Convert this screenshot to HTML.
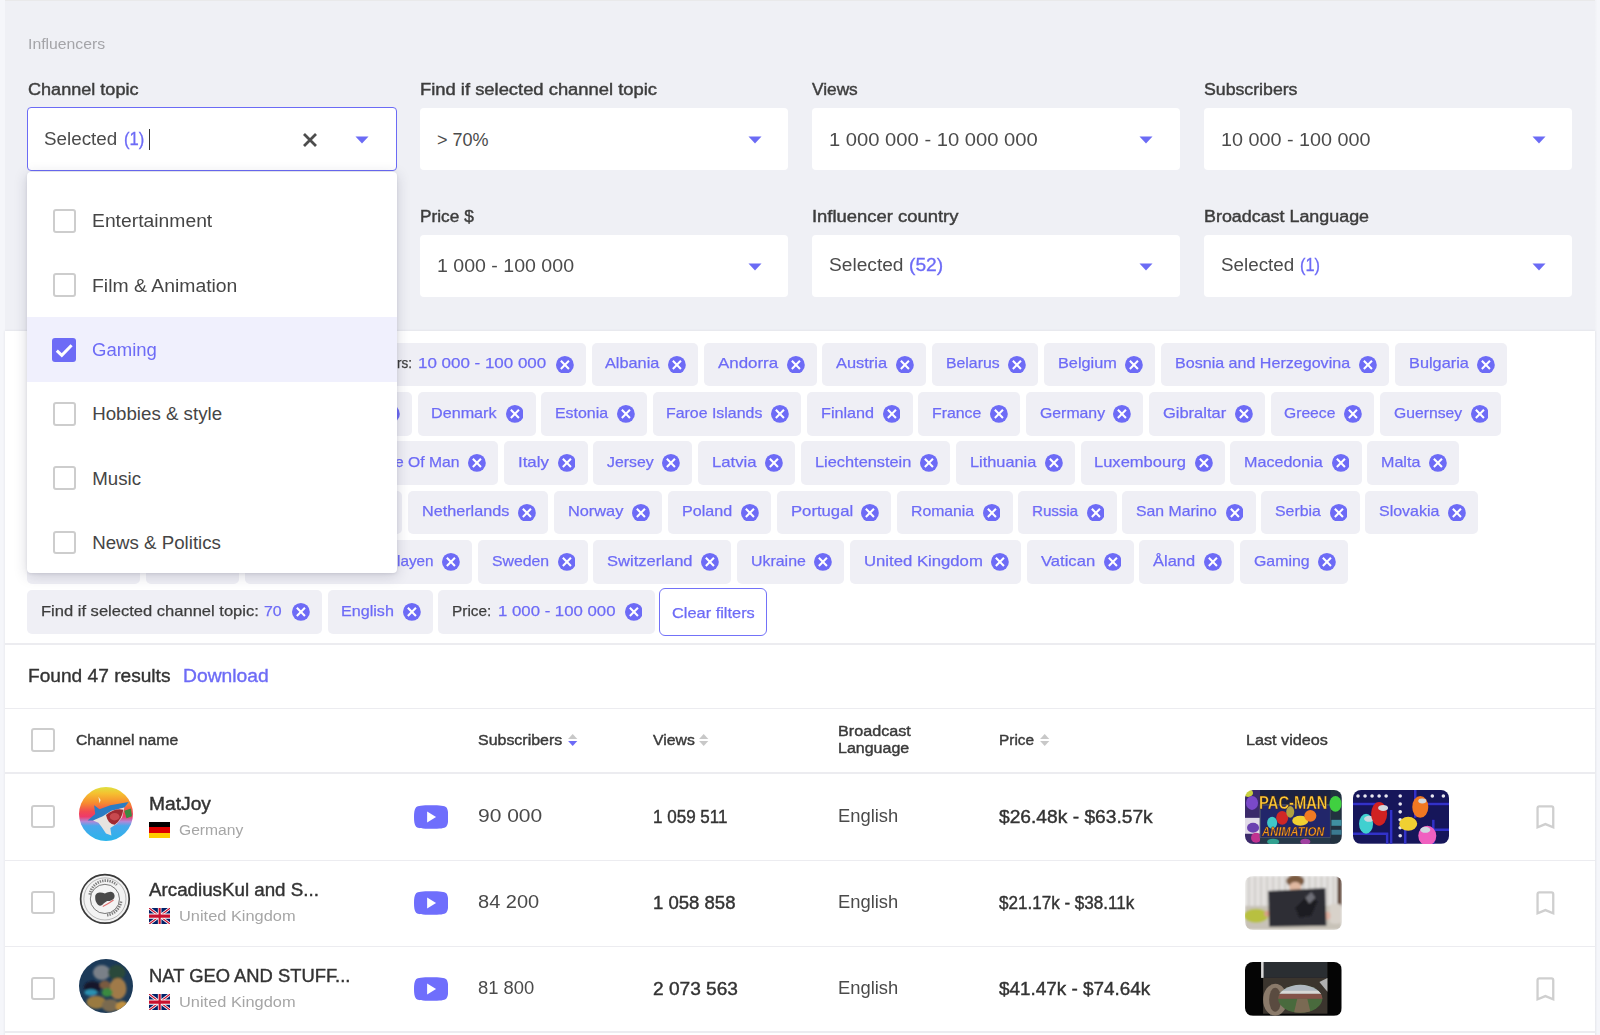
<!DOCTYPE html><html><head><meta charset="utf-8"><style>
html,body{margin:0;padding:0}
body{width:1600px;height:1035px;position:relative;overflow:hidden;background:#fff;font-family:"Liberation Sans",sans-serif}
.t{position:absolute;white-space:nowrap}
.r{position:absolute}
.av0{background:radial-gradient(circle at 55% 55%,#e8e4e0 0 18%,transparent 30%),linear-gradient(180deg,#f2c24a 0%,#ef6a3c 25%,#e84a6a 45%,#8ab6e0 60%,#3aa8e0 80%,#2b90d0 100%)}
.av1{background:radial-gradient(circle at 50% 50%,#555 0 14%,#fff 15% 52%,#666 53% 56%,#fff 57% 84%,#333 85% 92%,#bbb 93%)}
.av2{background:radial-gradient(circle at 65% 60%,#8a6a3a 0 18%,transparent 30%),radial-gradient(circle at 35% 70%,#6a5a30 0 15%,transparent 25%),linear-gradient(160deg,#1a3050 0%,#2a4a5a 40%,#3a5a40 70%,#1a2a3a 100%)}
.th{overflow:hidden}
.th svg,.r svg{display:block}
.th0a{background:radial-gradient(ellipse at 50% 25%,#f0b020 0 20%,transparent 30%),radial-gradient(ellipse at 50% 85%,#e89020 0 15%,transparent 25%),radial-gradient(circle at 30% 55%,#d03030 0 10%,transparent 16%),radial-gradient(circle at 75% 50%,#40c0a0 0 10%,transparent 16%),linear-gradient(90deg,#3a2a6a,#1a3a5a 30%,#2a2a5a 70%,#4a2a6a)}
.th0b{background:radial-gradient(circle at 35% 45%,#d02020 0 14%,transparent 20%),radial-gradient(circle at 60% 50%,#f0c020 0 10%,transparent 16%),radial-gradient(circle at 20% 60%,#40d0d0 0 10%,transparent 16%),radial-gradient(circle at 72% 35%,#f07a20 0 10%,transparent 16%),radial-gradient(circle at 80% 85%,#f070c0 0 10%,transparent 16%),linear-gradient(#1a1a8a,#15157a)}
.th1a{background:radial-gradient(ellipse at 50% 10%,#c8a080 0 10%,transparent 16%),linear-gradient(90deg,transparent 0 20%,#2a2a30 20% 82%,transparent 82%) 0 28%/100% 62% no-repeat,linear-gradient(90deg,#c8c8c0,#e8e4dc 50%,#d0ccc4)}
.th2a{background:radial-gradient(ellipse at 50% 60%,#b8b0a0 0 22%,#6a6050 28%,transparent 34%),#0a0a0a}
</style></head><body>
<div class="r" style="left:0.00px;top:0.00px;width:5.00px;height:1035.00px;background:#f5f6fa"></div>
<div class="r" style="left:1595.00px;top:0.00px;width:5.00px;height:1035.00px;background:linear-gradient(90deg,#f0f1f5,#f5f6fa 45%)"></div>
<div class="r" style="left:5.00px;top:0.00px;width:1590.00px;height:331.00px;background:#eff0f5"></div>
<div class="r" style="left:5.00px;top:0.00px;width:1590.00px;height:1.30px;background:#e9e9ea"></div>
<div class="r" style="left:5.00px;top:330.70px;width:1590.00px;height:709.30px;background:#ffffff;box-shadow:0 0 2.5px rgba(60,60,80,0.10)"></div>
<div class="t" style="left:27.50px;top:36.28px;font-size:15.5px;line-height:15.5px;color:#a4a4a8;transform:scaleX(1.0172);transform-origin:0 0;">Influencers</div>
<div class="t" style="left:27.50px;top:82.36px;font-size:16px;line-height:16px;color:#3d3d3d;-webkit-text-stroke:0.42px #3d3d3d;transform:scaleX(1.1293);transform-origin:0 0;">Channel topic</div>
<div class="t" style="left:419.50px;top:82.36px;font-size:16px;line-height:16px;color:#3d3d3d;-webkit-text-stroke:0.42px #3d3d3d;transform:scaleX(1.1485);transform-origin:0 0;">Find if selected channel topic</div>
<div class="t" style="left:811.75px;top:82.36px;font-size:16px;line-height:16px;color:#3d3d3d;-webkit-text-stroke:0.42px #3d3d3d;transform:scaleX(1.0790);transform-origin:0 0;">Views</div>
<div class="t" style="left:1203.50px;top:82.36px;font-size:16px;line-height:16px;color:#3d3d3d;-webkit-text-stroke:0.42px #3d3d3d;transform:scaleX(1.1065);transform-origin:0 0;">Subscribers</div>
<div class="t" style="left:420.00px;top:209.46px;font-size:16px;line-height:16px;color:#3d3d3d;-webkit-text-stroke:0.42px #3d3d3d;transform:scaleX(1.0793);transform-origin:0 0;">Price $</div>
<div class="t" style="left:811.50px;top:209.46px;font-size:16px;line-height:16px;color:#3d3d3d;-webkit-text-stroke:0.42px #3d3d3d;transform:scaleX(1.1517);transform-origin:0 0;">Influencer country</div>
<div class="t" style="left:1203.75px;top:209.46px;font-size:16px;line-height:16px;color:#3d3d3d;-webkit-text-stroke:0.42px #3d3d3d;transform:scaleX(1.1175);transform-origin:0 0;">Broadcast Language</div>
<div class="r" style="left:27.00px;top:107.00px;width:370.20px;height:63.60px;background:#fff;border:1.3px solid #6b6bf5;border-radius:4px;box-sizing:border-box"></div>
<div class="r" style="left:419.60px;top:108.00px;width:368.50px;height:62.00px;background:#fff;border-radius:4px"></div>
<div class="r" style="left:811.80px;top:108.00px;width:368.50px;height:62.00px;background:#fff;border-radius:4px"></div>
<div class="r" style="left:1203.75px;top:108.00px;width:368.50px;height:62.00px;background:#fff;border-radius:4px"></div>
<div class="r" style="left:27.00px;top:235.00px;width:368.50px;height:61.50px;background:#fff;border-radius:4px"></div>
<div class="r" style="left:419.60px;top:235.00px;width:368.50px;height:61.50px;background:#fff;border-radius:4px"></div>
<div class="r" style="left:811.80px;top:235.00px;width:368.50px;height:61.50px;background:#fff;border-radius:4px"></div>
<div class="r" style="left:1203.75px;top:235.00px;width:368.50px;height:61.50px;background:#fff;border-radius:4px"></div>
<div class="t" style="left:43.75px;top:130.06px;font-size:18px;line-height:18px;color:#4b4b4b;transform:scaleX(1.0457);transform-origin:0 0;">Selected</div>
<div class="t" style="left:124.00px;top:130.06px;font-size:18px;line-height:18px;color:#6d6bf6;transform:scaleX(0.9205);transform-origin:0 0;-webkit-text-stroke:0.3px #6d6bf6;">(1)</div>
<div class="r" style="left:148.50px;top:129.00px;width:1.50px;height:21.00px;background:#333"></div>
<svg class="r" style="left:302px;top:131.5px" width="16" height="16" viewBox="0 0 16 16"><path d="M2 2L14 14M14 2L2 14" stroke="#4d4d4d" stroke-width="2.8" stroke-linecap="butt"/></svg>
<svg class="r" style="left:354.5px;top:135.5px" width="14" height="8" viewBox="0 0 14 8"><path d="M0.5 0.5H13.5L7 7.5Z" fill="#6b6bf5"/></svg>
<div class="t" style="left:436.90px;top:130.96px;font-size:18px;line-height:18px;color:#4b4b4b;">&gt; 70%</div>
<svg class="r" style="left:747.8px;top:136px" width="14" height="8" viewBox="0 0 14 8"><path d="M0.5 0.5H13.5L7 7.5Z" fill="#6b6bf5"/></svg>
<div class="t" style="left:828.75px;top:130.66px;font-size:18px;line-height:18px;color:#4b4b4b;transform:scaleX(1.1214);transform-origin:0 0;">1 000 000 - 10 000 000</div>
<svg class="r" style="left:1139.3px;top:136px" width="14" height="8" viewBox="0 0 14 8"><path d="M0.5 0.5H13.5L7 7.5Z" fill="#6b6bf5"/></svg>
<div class="t" style="left:1220.50px;top:130.66px;font-size:18px;line-height:18px;color:#4b4b4b;transform:scaleX(1.0985);transform-origin:0 0;">10 000 - 100 000</div>
<svg class="r" style="left:1531.5px;top:136px" width="14" height="8" viewBox="0 0 14 8"><path d="M0.5 0.5H13.5L7 7.5Z" fill="#6b6bf5"/></svg>
<div class="t" style="left:436.75px;top:256.96px;font-size:18px;line-height:18px;color:#4b4b4b;transform:scaleX(1.0864);transform-origin:0 0;">1 000 - 100 000</div>
<svg class="r" style="left:747.8px;top:263px" width="14" height="8" viewBox="0 0 14 8"><path d="M0.5 0.5H13.5L7 7.5Z" fill="#6b6bf5"/></svg>
<div class="t" style="left:828.50px;top:256.16px;font-size:18px;line-height:18px;color:#4b4b4b;transform:scaleX(1.0635);transform-origin:0 0;">Selected</div>
<div class="t" style="left:908.80px;top:256.16px;font-size:18px;line-height:18px;color:#6d6bf6;transform:scaleX(1.0688);transform-origin:0 0;-webkit-text-stroke:0.3px #6d6bf6;">(52)</div>
<svg class="r" style="left:1139.3px;top:263px" width="14" height="8" viewBox="0 0 14 8"><path d="M0.5 0.5H13.5L7 7.5Z" fill="#6b6bf5"/></svg>
<div class="t" style="left:1220.75px;top:255.86px;font-size:18px;line-height:18px;color:#4b4b4b;transform:scaleX(1.0457);transform-origin:0 0;">Selected</div>
<div class="t" style="left:1300.00px;top:255.86px;font-size:18px;line-height:18px;color:#6d6bf6;transform:scaleX(0.9091);transform-origin:0 0;-webkit-text-stroke:0.3px #6d6bf6;">(1)</div>
<svg class="r" style="left:1531.5px;top:263px" width="14" height="8" viewBox="0 0 14 8"><path d="M0.5 0.5H13.5L7 7.5Z" fill="#6b6bf5"/></svg>
<div class="r" style="left:120.00px;top:342.50px;width:465.75px;height:43.75px;background:#efeff5;border-radius:5px"></div>
<svg class="r" style="left:555.75px;top:355.60px" width="17.8" height="17.8" viewBox="0 0 18 18"><circle cx="9" cy="9" r="9" fill="#6d6bf6"/><path d="M4.9 4.9L13.1 13.1M13.1 4.9L4.9 13.1" stroke="#fff" stroke-width="2.1"/></svg>
<div class="r" style="left:591.50px;top:342.50px;width:106.75px;height:43.75px;background:#efeff5;border-radius:5px"></div>
<svg class="r" style="left:668.25px;top:355.60px" width="17.8" height="17.8" viewBox="0 0 18 18"><circle cx="9" cy="9" r="9" fill="#6d6bf6"/><path d="M4.9 4.9L13.1 13.1M13.1 4.9L4.9 13.1" stroke="#fff" stroke-width="2.1"/></svg>
<div class="t" style="left:605.30px;top:355.00px;font-size:15px;line-height:15px;color:#6d6bf6;transform:scaleX(1.0859);transform-origin:0 0;-webkit-text-stroke:0.25px #6d6bf6;">Albania</div>
<div class="r" style="left:704.25px;top:342.50px;width:112.50px;height:43.75px;background:#efeff5;border-radius:5px"></div>
<svg class="r" style="left:786.75px;top:355.60px" width="17.8" height="17.8" viewBox="0 0 18 18"><circle cx="9" cy="9" r="9" fill="#6d6bf6"/><path d="M4.9 4.9L13.1 13.1M13.1 4.9L4.9 13.1" stroke="#fff" stroke-width="2.1"/></svg>
<div class="t" style="left:718.05px;top:355.00px;font-size:15px;line-height:15px;color:#6d6bf6;transform:scaleX(1.1265);transform-origin:0 0;-webkit-text-stroke:0.25px #6d6bf6;">Andorra</div>
<div class="r" style="left:822.25px;top:342.50px;width:103.50px;height:43.75px;background:#efeff5;border-radius:5px"></div>
<svg class="r" style="left:895.75px;top:355.60px" width="17.8" height="17.8" viewBox="0 0 18 18"><circle cx="9" cy="9" r="9" fill="#6d6bf6"/><path d="M4.9 4.9L13.1 13.1M13.1 4.9L4.9 13.1" stroke="#fff" stroke-width="2.1"/></svg>
<div class="t" style="left:836.05px;top:355.00px;font-size:15px;line-height:15px;color:#6d6bf6;transform:scaleX(1.0942);transform-origin:0 0;-webkit-text-stroke:0.25px #6d6bf6;">Austria</div>
<div class="r" style="left:931.75px;top:342.50px;width:106.00px;height:43.75px;background:#efeff5;border-radius:5px"></div>
<svg class="r" style="left:1007.75px;top:355.60px" width="17.8" height="17.8" viewBox="0 0 18 18"><circle cx="9" cy="9" r="9" fill="#6d6bf6"/><path d="M4.9 4.9L13.1 13.1M13.1 4.9L4.9 13.1" stroke="#fff" stroke-width="2.1"/></svg>
<div class="t" style="left:945.55px;top:355.00px;font-size:15px;line-height:15px;color:#6d6bf6;transform:scaleX(1.0541);transform-origin:0 0;-webkit-text-stroke:0.25px #6d6bf6;">Belarus</div>
<div class="r" style="left:1044.00px;top:342.50px;width:111.25px;height:43.75px;background:#efeff5;border-radius:5px"></div>
<svg class="r" style="left:1125.25px;top:355.60px" width="17.8" height="17.8" viewBox="0 0 18 18"><circle cx="9" cy="9" r="9" fill="#6d6bf6"/><path d="M4.9 4.9L13.1 13.1M13.1 4.9L4.9 13.1" stroke="#fff" stroke-width="2.1"/></svg>
<div class="t" style="left:1057.80px;top:355.00px;font-size:15px;line-height:15px;color:#6d6bf6;transform:scaleX(1.0858);transform-origin:0 0;-webkit-text-stroke:0.25px #6d6bf6;">Belgium</div>
<div class="r" style="left:1161.25px;top:342.50px;width:227.50px;height:43.75px;background:#efeff5;border-radius:5px"></div>
<svg class="r" style="left:1358.75px;top:355.60px" width="17.8" height="17.8" viewBox="0 0 18 18"><circle cx="9" cy="9" r="9" fill="#6d6bf6"/><path d="M4.9 4.9L13.1 13.1M13.1 4.9L4.9 13.1" stroke="#fff" stroke-width="2.1"/></svg>
<div class="t" style="left:1175.05px;top:355.00px;font-size:15px;line-height:15px;color:#6d6bf6;transform:scaleX(1.0713);transform-origin:0 0;-webkit-text-stroke:0.25px #6d6bf6;">Bosnia and Herzegovina</div>
<div class="r" style="left:1394.75px;top:342.50px;width:112.25px;height:43.75px;background:#efeff5;border-radius:5px"></div>
<svg class="r" style="left:1477.00px;top:355.60px" width="17.8" height="17.8" viewBox="0 0 18 18"><circle cx="9" cy="9" r="9" fill="#6d6bf6"/><path d="M4.9 4.9L13.1 13.1M13.1 4.9L4.9 13.1" stroke="#fff" stroke-width="2.1"/></svg>
<div class="t" style="left:1408.55px;top:355.00px;font-size:15px;line-height:15px;color:#6d6bf6;transform:scaleX(1.0872);transform-origin:0 0;-webkit-text-stroke:0.25px #6d6bf6;">Bulgaria</div>
<div class="r" style="left:300.00px;top:392.00px;width:111.75px;height:43.75px;background:#efeff5;border-radius:5px"></div>
<svg class="r" style="left:381.75px;top:405.10px" width="17.8" height="17.8" viewBox="0 0 18 18"><circle cx="9" cy="9" r="9" fill="#6d6bf6"/><path d="M4.9 4.9L13.1 13.1M13.1 4.9L4.9 13.1" stroke="#fff" stroke-width="2.1"/></svg>
<div class="r" style="left:417.50px;top:392.00px;width:118.00px;height:43.75px;background:#efeff5;border-radius:5px"></div>
<svg class="r" style="left:505.50px;top:405.10px" width="17.8" height="17.8" viewBox="0 0 18 18"><circle cx="9" cy="9" r="9" fill="#6d6bf6"/><path d="M4.9 4.9L13.1 13.1M13.1 4.9L4.9 13.1" stroke="#fff" stroke-width="2.1"/></svg>
<div class="t" style="left:431.30px;top:404.50px;font-size:15px;line-height:15px;color:#6d6bf6;transform:scaleX(1.0772);transform-origin:0 0;-webkit-text-stroke:0.25px #6d6bf6;">Denmark</div>
<div class="r" style="left:541.25px;top:392.00px;width:105.50px;height:43.75px;background:#efeff5;border-radius:5px"></div>
<svg class="r" style="left:616.75px;top:405.10px" width="17.8" height="17.8" viewBox="0 0 18 18"><circle cx="9" cy="9" r="9" fill="#6d6bf6"/><path d="M4.9 4.9L13.1 13.1M13.1 4.9L4.9 13.1" stroke="#fff" stroke-width="2.1"/></svg>
<div class="t" style="left:555.05px;top:404.50px;font-size:15px;line-height:15px;color:#6d6bf6;transform:scaleX(1.0609);transform-origin:0 0;-webkit-text-stroke:0.25px #6d6bf6;">Estonia</div>
<div class="r" style="left:652.50px;top:392.00px;width:148.75px;height:43.75px;background:#efeff5;border-radius:5px"></div>
<svg class="r" style="left:771.25px;top:405.10px" width="17.8" height="17.8" viewBox="0 0 18 18"><circle cx="9" cy="9" r="9" fill="#6d6bf6"/><path d="M4.9 4.9L13.1 13.1M13.1 4.9L4.9 13.1" stroke="#fff" stroke-width="2.1"/></svg>
<div class="t" style="left:666.30px;top:404.50px;font-size:15px;line-height:15px;color:#6d6bf6;transform:scaleX(1.0600);transform-origin:0 0;-webkit-text-stroke:0.25px #6d6bf6;">Faroe Islands</div>
<div class="r" style="left:807.00px;top:392.00px;width:105.50px;height:43.75px;background:#efeff5;border-radius:5px"></div>
<svg class="r" style="left:882.50px;top:405.10px" width="17.8" height="17.8" viewBox="0 0 18 18"><circle cx="9" cy="9" r="9" fill="#6d6bf6"/><path d="M4.9 4.9L13.1 13.1M13.1 4.9L4.9 13.1" stroke="#fff" stroke-width="2.1"/></svg>
<div class="t" style="left:820.80px;top:404.50px;font-size:15px;line-height:15px;color:#6d6bf6;transform:scaleX(1.0793);transform-origin:0 0;-webkit-text-stroke:0.25px #6d6bf6;">Finland</div>
<div class="r" style="left:918.25px;top:392.00px;width:101.75px;height:43.75px;background:#efeff5;border-radius:5px"></div>
<svg class="r" style="left:990.00px;top:405.10px" width="17.8" height="17.8" viewBox="0 0 18 18"><circle cx="9" cy="9" r="9" fill="#6d6bf6"/><path d="M4.9 4.9L13.1 13.1M13.1 4.9L4.9 13.1" stroke="#fff" stroke-width="2.1"/></svg>
<div class="t" style="left:932.05px;top:404.50px;font-size:15px;line-height:15px;color:#6d6bf6;transform:scaleX(1.0567);transform-origin:0 0;-webkit-text-stroke:0.25px #6d6bf6;">France</div>
<div class="r" style="left:1025.75px;top:392.00px;width:117.50px;height:43.75px;background:#efeff5;border-radius:5px"></div>
<svg class="r" style="left:1113.25px;top:405.10px" width="17.8" height="17.8" viewBox="0 0 18 18"><circle cx="9" cy="9" r="9" fill="#6d6bf6"/><path d="M4.9 4.9L13.1 13.1M13.1 4.9L4.9 13.1" stroke="#fff" stroke-width="2.1"/></svg>
<div class="t" style="left:1039.55px;top:404.50px;font-size:15px;line-height:15px;color:#6d6bf6;transform:scaleX(1.0551);transform-origin:0 0;-webkit-text-stroke:0.25px #6d6bf6;">Germany</div>
<div class="r" style="left:1149.25px;top:392.00px;width:115.50px;height:43.75px;background:#efeff5;border-radius:5px"></div>
<svg class="r" style="left:1234.75px;top:405.10px" width="17.8" height="17.8" viewBox="0 0 18 18"><circle cx="9" cy="9" r="9" fill="#6d6bf6"/><path d="M4.9 4.9L13.1 13.1M13.1 4.9L4.9 13.1" stroke="#fff" stroke-width="2.1"/></svg>
<div class="t" style="left:1163.05px;top:404.50px;font-size:15px;line-height:15px;color:#6d6bf6;transform:scaleX(1.0974);transform-origin:0 0;-webkit-text-stroke:0.25px #6d6bf6;">Gibraltar</div>
<div class="r" style="left:1270.50px;top:392.00px;width:103.75px;height:43.75px;background:#efeff5;border-radius:5px"></div>
<svg class="r" style="left:1344.25px;top:405.10px" width="17.8" height="17.8" viewBox="0 0 18 18"><circle cx="9" cy="9" r="9" fill="#6d6bf6"/><path d="M4.9 4.9L13.1 13.1M13.1 4.9L4.9 13.1" stroke="#fff" stroke-width="2.1"/></svg>
<div class="t" style="left:1284.30px;top:404.50px;font-size:15px;line-height:15px;color:#6d6bf6;transform:scaleX(1.0437);transform-origin:0 0;-webkit-text-stroke:0.25px #6d6bf6;">Greece</div>
<div class="r" style="left:1380.00px;top:392.00px;width:120.50px;height:43.75px;background:#efeff5;border-radius:5px"></div>
<svg class="r" style="left:1470.50px;top:405.10px" width="17.8" height="17.8" viewBox="0 0 18 18"><circle cx="9" cy="9" r="9" fill="#6d6bf6"/><path d="M4.9 4.9L13.1 13.1M13.1 4.9L4.9 13.1" stroke="#fff" stroke-width="2.1"/></svg>
<div class="t" style="left:1393.80px;top:404.50px;font-size:15px;line-height:15px;color:#6d6bf6;transform:scaleX(1.0469);transform-origin:0 0;-webkit-text-stroke:0.25px #6d6bf6;">Guernsey</div>
<div class="r" style="left:300.00px;top:441.25px;width:198.25px;height:43.75px;background:#efeff5;border-radius:5px"></div>
<svg class="r" style="left:468.25px;top:454.35px" width="17.8" height="17.8" viewBox="0 0 18 18"><circle cx="9" cy="9" r="9" fill="#6d6bf6"/><path d="M4.9 4.9L13.1 13.1M13.1 4.9L4.9 13.1" stroke="#fff" stroke-width="2.1"/></svg>
<div class="r" style="left:504.25px;top:441.25px;width:83.25px;height:43.75px;background:#efeff5;border-radius:5px"></div>
<svg class="r" style="left:557.50px;top:454.35px" width="17.8" height="17.8" viewBox="0 0 18 18"><circle cx="9" cy="9" r="9" fill="#6d6bf6"/><path d="M4.9 4.9L13.1 13.1M13.1 4.9L4.9 13.1" stroke="#fff" stroke-width="2.1"/></svg>
<div class="t" style="left:518.05px;top:453.75px;font-size:15px;line-height:15px;color:#6d6bf6;transform:scaleX(1.1218);transform-origin:0 0;-webkit-text-stroke:0.25px #6d6bf6;">Italy</div>
<div class="r" style="left:593.25px;top:441.25px;width:99.00px;height:43.75px;background:#efeff5;border-radius:5px"></div>
<svg class="r" style="left:662.25px;top:454.35px" width="17.8" height="17.8" viewBox="0 0 18 18"><circle cx="9" cy="9" r="9" fill="#6d6bf6"/><path d="M4.9 4.9L13.1 13.1M13.1 4.9L4.9 13.1" stroke="#fff" stroke-width="2.1"/></svg>
<div class="t" style="left:607.05px;top:453.75px;font-size:15px;line-height:15px;color:#6d6bf6;transform:scaleX(1.0543);transform-origin:0 0;-webkit-text-stroke:0.25px #6d6bf6;">Jersey</div>
<div class="r" style="left:698.00px;top:441.25px;width:97.00px;height:43.75px;background:#efeff5;border-radius:5px"></div>
<svg class="r" style="left:765.00px;top:454.35px" width="17.8" height="17.8" viewBox="0 0 18 18"><circle cx="9" cy="9" r="9" fill="#6d6bf6"/><path d="M4.9 4.9L13.1 13.1M13.1 4.9L4.9 13.1" stroke="#fff" stroke-width="2.1"/></svg>
<div class="t" style="left:711.80px;top:453.75px;font-size:15px;line-height:15px;color:#6d6bf6;transform:scaleX(1.1136);transform-origin:0 0;-webkit-text-stroke:0.25px #6d6bf6;">Latvia</div>
<div class="r" style="left:801.25px;top:441.25px;width:148.75px;height:43.75px;background:#efeff5;border-radius:5px"></div>
<svg class="r" style="left:920.00px;top:454.35px" width="17.8" height="17.8" viewBox="0 0 18 18"><circle cx="9" cy="9" r="9" fill="#6d6bf6"/><path d="M4.9 4.9L13.1 13.1M13.1 4.9L4.9 13.1" stroke="#fff" stroke-width="2.1"/></svg>
<div class="t" style="left:815.05px;top:453.75px;font-size:15px;line-height:15px;color:#6d6bf6;transform:scaleX(1.0899);transform-origin:0 0;-webkit-text-stroke:0.25px #6d6bf6;">Liechtenstein</div>
<div class="r" style="left:956.00px;top:441.25px;width:118.75px;height:43.75px;background:#efeff5;border-radius:5px"></div>
<svg class="r" style="left:1044.75px;top:454.35px" width="17.8" height="17.8" viewBox="0 0 18 18"><circle cx="9" cy="9" r="9" fill="#6d6bf6"/><path d="M4.9 4.9L13.1 13.1M13.1 4.9L4.9 13.1" stroke="#fff" stroke-width="2.1"/></svg>
<div class="t" style="left:969.80px;top:453.75px;font-size:15px;line-height:15px;color:#6d6bf6;transform:scaleX(1.0895);transform-origin:0 0;-webkit-text-stroke:0.25px #6d6bf6;">Lithuania</div>
<div class="r" style="left:1080.50px;top:441.25px;width:144.25px;height:43.75px;background:#efeff5;border-radius:5px"></div>
<svg class="r" style="left:1194.75px;top:454.35px" width="17.8" height="17.8" viewBox="0 0 18 18"><circle cx="9" cy="9" r="9" fill="#6d6bf6"/><path d="M4.9 4.9L13.1 13.1M13.1 4.9L4.9 13.1" stroke="#fff" stroke-width="2.1"/></svg>
<div class="t" style="left:1094.30px;top:453.75px;font-size:15px;line-height:15px;color:#6d6bf6;transform:scaleX(1.1013);transform-origin:0 0;-webkit-text-stroke:0.25px #6d6bf6;">Luxembourg</div>
<div class="r" style="left:1230.25px;top:441.25px;width:131.25px;height:43.75px;background:#efeff5;border-radius:5px"></div>
<svg class="r" style="left:1331.50px;top:454.35px" width="17.8" height="17.8" viewBox="0 0 18 18"><circle cx="9" cy="9" r="9" fill="#6d6bf6"/><path d="M4.9 4.9L13.1 13.1M13.1 4.9L4.9 13.1" stroke="#fff" stroke-width="2.1"/></svg>
<div class="t" style="left:1244.05px;top:453.75px;font-size:15px;line-height:15px;color:#6d6bf6;transform:scaleX(1.0743);transform-origin:0 0;-webkit-text-stroke:0.25px #6d6bf6;">Macedonia</div>
<div class="r" style="left:1367.25px;top:441.25px;width:91.75px;height:43.75px;background:#efeff5;border-radius:5px"></div>
<svg class="r" style="left:1429.00px;top:454.35px" width="17.8" height="17.8" viewBox="0 0 18 18"><circle cx="9" cy="9" r="9" fill="#6d6bf6"/><path d="M4.9 4.9L13.1 13.1M13.1 4.9L4.9 13.1" stroke="#fff" stroke-width="2.1"/></svg>
<div class="t" style="left:1381.05px;top:453.75px;font-size:15px;line-height:15px;color:#6d6bf6;transform:scaleX(1.0722);transform-origin:0 0;-webkit-text-stroke:0.25px #6d6bf6;">Malta</div>
<div class="r" style="left:300.00px;top:490.50px;width:102.00px;height:43.75px;background:#efeff5;border-radius:5px"></div>
<svg class="r" style="left:372.00px;top:503.60px" width="17.8" height="17.8" viewBox="0 0 18 18"><circle cx="9" cy="9" r="9" fill="#6d6bf6"/><path d="M4.9 4.9L13.1 13.1M13.1 4.9L4.9 13.1" stroke="#fff" stroke-width="2.1"/></svg>
<div class="r" style="left:408.25px;top:490.50px;width:139.75px;height:43.75px;background:#efeff5;border-radius:5px"></div>
<svg class="r" style="left:518.00px;top:503.60px" width="17.8" height="17.8" viewBox="0 0 18 18"><circle cx="9" cy="9" r="9" fill="#6d6bf6"/><path d="M4.9 4.9L13.1 13.1M13.1 4.9L4.9 13.1" stroke="#fff" stroke-width="2.1"/></svg>
<div class="t" style="left:422.05px;top:503.00px;font-size:15px;line-height:15px;color:#6d6bf6;transform:scaleX(1.0797);transform-origin:0 0;-webkit-text-stroke:0.25px #6d6bf6;">Netherlands</div>
<div class="r" style="left:554.25px;top:490.50px;width:107.75px;height:43.75px;background:#efeff5;border-radius:5px"></div>
<svg class="r" style="left:632.00px;top:503.60px" width="17.8" height="17.8" viewBox="0 0 18 18"><circle cx="9" cy="9" r="9" fill="#6d6bf6"/><path d="M4.9 4.9L13.1 13.1M13.1 4.9L4.9 13.1" stroke="#fff" stroke-width="2.1"/></svg>
<div class="t" style="left:568.05px;top:503.00px;font-size:15px;line-height:15px;color:#6d6bf6;transform:scaleX(1.0885);transform-origin:0 0;-webkit-text-stroke:0.25px #6d6bf6;">Norway</div>
<div class="r" style="left:668.25px;top:490.50px;width:102.50px;height:43.75px;background:#efeff5;border-radius:5px"></div>
<svg class="r" style="left:740.75px;top:503.60px" width="17.8" height="17.8" viewBox="0 0 18 18"><circle cx="9" cy="9" r="9" fill="#6d6bf6"/><path d="M4.9 4.9L13.1 13.1M13.1 4.9L4.9 13.1" stroke="#fff" stroke-width="2.1"/></svg>
<div class="t" style="left:682.05px;top:503.00px;font-size:15px;line-height:15px;color:#6d6bf6;transform:scaleX(1.0728);transform-origin:0 0;-webkit-text-stroke:0.25px #6d6bf6;">Poland</div>
<div class="r" style="left:776.75px;top:490.50px;width:114.50px;height:43.75px;background:#efeff5;border-radius:5px"></div>
<svg class="r" style="left:861.25px;top:503.60px" width="17.8" height="17.8" viewBox="0 0 18 18"><circle cx="9" cy="9" r="9" fill="#6d6bf6"/><path d="M4.9 4.9L13.1 13.1M13.1 4.9L4.9 13.1" stroke="#fff" stroke-width="2.1"/></svg>
<div class="t" style="left:790.55px;top:503.00px;font-size:15px;line-height:15px;color:#6d6bf6;transform:scaleX(1.1119);transform-origin:0 0;-webkit-text-stroke:0.25px #6d6bf6;">Portugal</div>
<div class="r" style="left:897.00px;top:490.50px;width:115.50px;height:43.75px;background:#efeff5;border-radius:5px"></div>
<svg class="r" style="left:982.50px;top:503.60px" width="17.8" height="17.8" viewBox="0 0 18 18"><circle cx="9" cy="9" r="9" fill="#6d6bf6"/><path d="M4.9 4.9L13.1 13.1M13.1 4.9L4.9 13.1" stroke="#fff" stroke-width="2.1"/></svg>
<div class="t" style="left:910.80px;top:503.00px;font-size:15px;line-height:15px;color:#6d6bf6;transform:scaleX(1.0508);transform-origin:0 0;-webkit-text-stroke:0.25px #6d6bf6;">Romania</div>
<div class="r" style="left:1018.25px;top:490.50px;width:98.25px;height:43.75px;background:#efeff5;border-radius:5px"></div>
<svg class="r" style="left:1086.50px;top:503.60px" width="17.8" height="17.8" viewBox="0 0 18 18"><circle cx="9" cy="9" r="9" fill="#6d6bf6"/><path d="M4.9 4.9L13.1 13.1M13.1 4.9L4.9 13.1" stroke="#fff" stroke-width="2.1"/></svg>
<div class="t" style="left:1032.05px;top:503.00px;font-size:15px;line-height:15px;color:#6d6bf6;-webkit-text-stroke:0.25px #6d6bf6;">Russia</div>
<div class="r" style="left:1122.25px;top:490.50px;width:133.25px;height:43.75px;background:#efeff5;border-radius:5px"></div>
<svg class="r" style="left:1225.50px;top:503.60px" width="17.8" height="17.8" viewBox="0 0 18 18"><circle cx="9" cy="9" r="9" fill="#6d6bf6"/><path d="M4.9 4.9L13.1 13.1M13.1 4.9L4.9 13.1" stroke="#fff" stroke-width="2.1"/></svg>
<div class="t" style="left:1136.05px;top:503.00px;font-size:15px;line-height:15px;color:#6d6bf6;transform:scaleX(1.0541);transform-origin:0 0;-webkit-text-stroke:0.25px #6d6bf6;">San Marino</div>
<div class="r" style="left:1261.25px;top:490.50px;width:98.25px;height:43.75px;background:#efeff5;border-radius:5px"></div>
<svg class="r" style="left:1329.50px;top:503.60px" width="17.8" height="17.8" viewBox="0 0 18 18"><circle cx="9" cy="9" r="9" fill="#6d6bf6"/><path d="M4.9 4.9L13.1 13.1M13.1 4.9L4.9 13.1" stroke="#fff" stroke-width="2.1"/></svg>
<div class="t" style="left:1275.05px;top:503.00px;font-size:15px;line-height:15px;color:#6d6bf6;transform:scaleX(1.0577);transform-origin:0 0;-webkit-text-stroke:0.25px #6d6bf6;">Serbia</div>
<div class="r" style="left:1365.00px;top:490.50px;width:112.75px;height:43.75px;background:#efeff5;border-radius:5px"></div>
<svg class="r" style="left:1447.75px;top:503.60px" width="17.8" height="17.8" viewBox="0 0 18 18"><circle cx="9" cy="9" r="9" fill="#6d6bf6"/><path d="M4.9 4.9L13.1 13.1M13.1 4.9L4.9 13.1" stroke="#fff" stroke-width="2.1"/></svg>
<div class="t" style="left:1378.80px;top:503.00px;font-size:15px;line-height:15px;color:#6d6bf6;transform:scaleX(1.0644);transform-origin:0 0;-webkit-text-stroke:0.25px #6d6bf6;">Slovakia</div>
<div class="r" style="left:27.00px;top:540.00px;width:113.00px;height:43.75px;background:#efeff5;border-radius:5px"></div>
<svg class="r" style="left:110.00px;top:553.10px" width="17.8" height="17.8" viewBox="0 0 18 18"><circle cx="9" cy="9" r="9" fill="#6d6bf6"/><path d="M4.9 4.9L13.1 13.1M13.1 4.9L4.9 13.1" stroke="#fff" stroke-width="2.1"/></svg>
<div class="r" style="left:146.00px;top:540.00px;width:92.50px;height:43.75px;background:#efeff5;border-radius:5px"></div>
<svg class="r" style="left:208.50px;top:553.10px" width="17.8" height="17.8" viewBox="0 0 18 18"><circle cx="9" cy="9" r="9" fill="#6d6bf6"/><path d="M4.9 4.9L13.1 13.1M13.1 4.9L4.9 13.1" stroke="#fff" stroke-width="2.1"/></svg>
<div class="r" style="left:244.50px;top:540.00px;width:227.75px;height:43.75px;background:#efeff5;border-radius:5px"></div>
<svg class="r" style="left:442.25px;top:553.10px" width="17.8" height="17.8" viewBox="0 0 18 18"><circle cx="9" cy="9" r="9" fill="#6d6bf6"/><path d="M4.9 4.9L13.1 13.1M13.1 4.9L4.9 13.1" stroke="#fff" stroke-width="2.1"/></svg>
<div class="r" style="left:478.00px;top:540.00px;width:109.50px;height:43.75px;background:#efeff5;border-radius:5px"></div>
<svg class="r" style="left:557.50px;top:553.10px" width="17.8" height="17.8" viewBox="0 0 18 18"><circle cx="9" cy="9" r="9" fill="#6d6bf6"/><path d="M4.9 4.9L13.1 13.1M13.1 4.9L4.9 13.1" stroke="#fff" stroke-width="2.1"/></svg>
<div class="t" style="left:491.80px;top:552.50px;font-size:15px;line-height:15px;color:#6d6bf6;transform:scaleX(1.0535);transform-origin:0 0;-webkit-text-stroke:0.25px #6d6bf6;">Sweden</div>
<div class="r" style="left:593.25px;top:540.00px;width:138.00px;height:43.75px;background:#efeff5;border-radius:5px"></div>
<svg class="r" style="left:701.25px;top:553.10px" width="17.8" height="17.8" viewBox="0 0 18 18"><circle cx="9" cy="9" r="9" fill="#6d6bf6"/><path d="M4.9 4.9L13.1 13.1M13.1 4.9L4.9 13.1" stroke="#fff" stroke-width="2.1"/></svg>
<div class="t" style="left:607.05px;top:552.50px;font-size:15px;line-height:15px;color:#6d6bf6;transform:scaleX(1.1038);transform-origin:0 0;-webkit-text-stroke:0.25px #6d6bf6;">Switzerland</div>
<div class="r" style="left:737.00px;top:540.00px;width:107.25px;height:43.75px;background:#efeff5;border-radius:5px"></div>
<svg class="r" style="left:814.25px;top:553.10px" width="17.8" height="17.8" viewBox="0 0 18 18"><circle cx="9" cy="9" r="9" fill="#6d6bf6"/><path d="M4.9 4.9L13.1 13.1M13.1 4.9L4.9 13.1" stroke="#fff" stroke-width="2.1"/></svg>
<div class="t" style="left:750.80px;top:552.50px;font-size:15px;line-height:15px;color:#6d6bf6;transform:scaleX(1.0609);transform-origin:0 0;-webkit-text-stroke:0.25px #6d6bf6;">Ukraine</div>
<div class="r" style="left:850.00px;top:540.00px;width:171.25px;height:43.75px;background:#efeff5;border-radius:5px"></div>
<svg class="r" style="left:991.25px;top:553.10px" width="17.8" height="17.8" viewBox="0 0 18 18"><circle cx="9" cy="9" r="9" fill="#6d6bf6"/><path d="M4.9 4.9L13.1 13.1M13.1 4.9L4.9 13.1" stroke="#fff" stroke-width="2.1"/></svg>
<div class="t" style="left:863.80px;top:552.50px;font-size:15px;line-height:15px;color:#6d6bf6;transform:scaleX(1.1133);transform-origin:0 0;-webkit-text-stroke:0.25px #6d6bf6;">United Kingdom</div>
<div class="r" style="left:1027.00px;top:540.00px;width:106.50px;height:43.75px;background:#efeff5;border-radius:5px"></div>
<svg class="r" style="left:1103.50px;top:553.10px" width="17.8" height="17.8" viewBox="0 0 18 18"><circle cx="9" cy="9" r="9" fill="#6d6bf6"/><path d="M4.9 4.9L13.1 13.1M13.1 4.9L4.9 13.1" stroke="#fff" stroke-width="2.1"/></svg>
<div class="t" style="left:1040.80px;top:552.50px;font-size:15px;line-height:15px;color:#6d6bf6;transform:scaleX(1.1063);transform-origin:0 0;-webkit-text-stroke:0.25px #6d6bf6;">Vatican</div>
<div class="r" style="left:1139.25px;top:540.00px;width:94.50px;height:43.75px;background:#efeff5;border-radius:5px"></div>
<svg class="r" style="left:1203.75px;top:553.10px" width="17.8" height="17.8" viewBox="0 0 18 18"><circle cx="9" cy="9" r="9" fill="#6d6bf6"/><path d="M4.9 4.9L13.1 13.1M13.1 4.9L4.9 13.1" stroke="#fff" stroke-width="2.1"/></svg>
<div class="t" style="left:1153.05px;top:552.50px;font-size:15px;line-height:15px;color:#6d6bf6;transform:scaleX(1.0978);transform-origin:0 0;-webkit-text-stroke:0.25px #6d6bf6;">Åland</div>
<div class="r" style="left:1240.00px;top:540.00px;width:108.00px;height:43.75px;background:#efeff5;border-radius:5px"></div>
<svg class="r" style="left:1318.00px;top:553.10px" width="17.8" height="17.8" viewBox="0 0 18 18"><circle cx="9" cy="9" r="9" fill="#6d6bf6"/><path d="M4.9 4.9L13.1 13.1M13.1 4.9L4.9 13.1" stroke="#fff" stroke-width="2.1"/></svg>
<div class="t" style="left:1253.80px;top:552.50px;font-size:15px;line-height:15px;color:#6d6bf6;transform:scaleX(1.0590);transform-origin:0 0;-webkit-text-stroke:0.25px #6d6bf6;">Gaming</div>
<div class="t" style="left:397.00px;top:355.00px;font-size:15px;line-height:15px;color:#3d3d3d;transform:scaleX(0.9009);transform-origin:0 0;-webkit-text-stroke:0.25px #3d3d3d;">rs:</div>
<div class="t" style="left:418.00px;top:355.00px;font-size:15px;line-height:15px;color:#6d6bf6;transform:scaleX(1.1305);transform-origin:0 0;-webkit-text-stroke:0.25px #6d6bf6;">10 000 - 100 000</div>
<div class="t" style="left:395.00px;top:453.80px;font-size:15px;line-height:15px;color:#6d6bf6;transform:scaleX(1.0454);transform-origin:0 0;-webkit-text-stroke:0.25px #6d6bf6;">e Of Man</div>
<div class="t" style="left:396.50px;top:552.50px;font-size:15px;line-height:15px;color:#6d6bf6;transform:scaleX(1.0181);transform-origin:0 0;-webkit-text-stroke:0.25px #6d6bf6;">layen</div>
<div class="r" style="left:27.00px;top:590.00px;width:295.00px;height:43.75px;background:#efeff5;border-radius:5px"></div>
<svg class="r" style="left:292.00px;top:603.10px" width="17.8" height="17.8" viewBox="0 0 18 18"><circle cx="9" cy="9" r="9" fill="#6d6bf6"/><path d="M4.9 4.9L13.1 13.1M13.1 4.9L4.9 13.1" stroke="#fff" stroke-width="2.1"/></svg>
<div class="t" style="left:40.80px;top:602.90px;font-size:15px;line-height:15px;color:#3d3d3d;transform:scaleX(1.1022);transform-origin:0 0;-webkit-text-stroke:0.25px #3d3d3d;">Find if selected channel topic:</div>
<div class="t" style="left:264.30px;top:602.90px;font-size:15px;line-height:15px;color:#6d6bf6;transform:scaleX(1.0599);transform-origin:0 0;-webkit-text-stroke:0.25px #6d6bf6;">70</div>
<div class="r" style="left:327.50px;top:590.00px;width:105.30px;height:43.75px;background:#efeff5;border-radius:5px"></div>
<svg class="r" style="left:402.80px;top:603.10px" width="17.8" height="17.8" viewBox="0 0 18 18"><circle cx="9" cy="9" r="9" fill="#6d6bf6"/><path d="M4.9 4.9L13.1 13.1M13.1 4.9L4.9 13.1" stroke="#fff" stroke-width="2.1"/></svg>
<div class="t" style="left:341.30px;top:602.50px;font-size:15px;line-height:15px;color:#6d6bf6;transform:scaleX(1.0752);transform-origin:0 0;-webkit-text-stroke:0.25px #6d6bf6;">English</div>
<div class="r" style="left:438.10px;top:590.00px;width:216.60px;height:43.75px;background:#efeff5;border-radius:5px"></div>
<svg class="r" style="left:624.70px;top:603.10px" width="17.8" height="17.8" viewBox="0 0 18 18"><circle cx="9" cy="9" r="9" fill="#6d6bf6"/><path d="M4.9 4.9L13.1 13.1M13.1 4.9L4.9 13.1" stroke="#fff" stroke-width="2.1"/></svg>
<div class="t" style="left:451.90px;top:602.90px;font-size:15px;line-height:15px;color:#3d3d3d;transform:scaleX(1.0261);transform-origin:0 0;-webkit-text-stroke:0.25px #3d3d3d;">Price:</div>
<div class="t" style="left:497.50px;top:602.90px;font-size:15px;line-height:15px;color:#6d6bf6;transform:scaleX(1.1180);transform-origin:0 0;-webkit-text-stroke:0.25px #6d6bf6;">1 000 - 100 000</div>
<div class="r" style="left:659.30px;top:588.40px;width:107.40px;height:47.20px;border:1.7px solid #7372f8;border-radius:6px;box-sizing:border-box;background:#fff"></div>
<div class="t" style="left:671.90px;top:604.60px;font-size:15px;line-height:15px;color:#6d6bf6;transform:scaleX(1.0916);transform-origin:0 0;-webkit-text-stroke:0.25px #6d6bf6;">Clear filters</div>
<div class="r" style="left:27px;top:172px;width:370px;height:401px;background:#fff;border-radius:4px;box-shadow:0 3px 14px rgba(40,40,70,0.18),0 1px 3px rgba(40,40,70,0.10);overflow:hidden">
<div class="r" style="left:25.50px;top:37.05px;width:23.60px;height:23.60px;border:2.2px solid #cdcdcd;border-radius:3px;box-sizing:border-box"></div>
<div class="t" style="left:65.20px;top:40.22px;font-size:18.7px;line-height:18.7px;color:#454545;transform:scaleX(1.0335);transform-origin:0 0;">Entertainment</div>
<div class="r" style="left:25.50px;top:101.40px;width:23.60px;height:23.60px;border:2.2px solid #cdcdcd;border-radius:3px;box-sizing:border-box"></div>
<div class="t" style="left:65.20px;top:104.57px;font-size:18.7px;line-height:18.7px;color:#454545;transform:scaleX(1.0371);transform-origin:0 0;">Film &amp; Animation</div>
<div class="r" style="left:0.00px;top:145.25px;width:370.00px;height:64.60px;background:#f0f0fd"></div>
<div class="r" style="left:25.20px;top:165.55px;width:24.20px;height:24.00px;background:#6d6bf6;border-radius:3px"></div>
<svg class="r" style="left:25.2px;top:165.55px" width="24" height="24" viewBox="0 0 24 24"><path d="M4.8 12.6L9.8 17.4L19.6 7.2" stroke="#fff" stroke-width="3" fill="none"/></svg>
<div class="t" style="left:65.20px;top:168.92px;font-size:18.7px;line-height:18.7px;color:#6d6bf6;transform:scaleX(0.9924);transform-origin:0 0;">Gaming</div>
<div class="r" style="left:25.50px;top:230.10px;width:23.60px;height:23.60px;border:2.2px solid #cdcdcd;border-radius:3px;box-sizing:border-box"></div>
<div class="t" style="left:65.20px;top:233.27px;font-size:18.7px;line-height:18.7px;color:#454545;">Hobbies &amp; style</div>
<div class="r" style="left:25.50px;top:294.45px;width:23.60px;height:23.60px;border:2.2px solid #cdcdcd;border-radius:3px;box-sizing:border-box"></div>
<div class="t" style="left:65.20px;top:297.62px;font-size:18.7px;line-height:18.7px;color:#454545;">Music</div>
<div class="r" style="left:25.50px;top:358.80px;width:23.60px;height:23.60px;border:2.2px solid #cdcdcd;border-radius:3px;box-sizing:border-box"></div>
<div class="t" style="left:65.20px;top:361.97px;font-size:18.7px;line-height:18.7px;color:#454545;">News &amp; Politics</div>
</div>
<div class="r" style="left:5.00px;top:643.30px;width:1590.00px;height:1.50px;background:#ececf0"></div>
<div class="r" style="left:5.00px;top:707.70px;width:1590.00px;height:1.50px;background:#ececf0"></div>
<div class="r" style="left:5.00px;top:772.00px;width:1590.00px;height:1.50px;background:#ececf0"></div>
<div class="r" style="left:5.00px;top:859.80px;width:1590.00px;height:1.50px;background:#ececf0"></div>
<div class="r" style="left:5.00px;top:945.50px;width:1590.00px;height:1.50px;background:#ececf0"></div>
<div class="r" style="left:5.00px;top:1031.00px;width:1590.00px;height:1.50px;background:#ececf0"></div>
<div class="t" style="left:27.75px;top:668.20px;font-size:17.6px;line-height:17.6px;color:#333333;transform:scaleX(1.0870);transform-origin:0 0;-webkit-text-stroke:0.35px #333333;">Found 47 results</div>
<div class="t" style="left:182.80px;top:668.20px;font-size:17.6px;line-height:17.6px;color:#6d6bf6;transform:scaleX(1.0952);transform-origin:0 0;-webkit-text-stroke:0.35px #6d6bf6;">Download</div>
<div class="r" style="left:31.20px;top:728.00px;width:23.60px;height:23.60px;border:2.2px solid #cdcdcd;border-radius:3px;box-sizing:border-box"></div>
<div class="t" style="left:76.00px;top:731.88px;font-size:15.5px;line-height:15.5px;color:#3a3a3a;-webkit-text-stroke:0.42px #3a3a3a;transform:scaleX(1.0129);transform-origin:0 0;">Channel name</div>
<div class="t" style="left:478.25px;top:732.38px;font-size:15.5px;line-height:15.5px;color:#3a3a3a;-webkit-text-stroke:0.42px #3a3a3a;transform:scaleX(1.0293);transform-origin:0 0;">Subscribers</div>
<div class="t" style="left:652.50px;top:732.38px;font-size:15.5px;line-height:15.5px;color:#3a3a3a;-webkit-text-stroke:0.42px #3a3a3a;transform:scaleX(1.0171);transform-origin:0 0;">Views</div>
<div class="t" style="left:837.80px;top:723.48px;font-size:15.5px;line-height:15.5px;color:#3a3a3a;-webkit-text-stroke:0.42px #3a3a3a;transform:scaleX(1.0430);transform-origin:0 0;">Broadcast</div>
<div class="t" style="left:837.80px;top:739.63px;font-size:15.5px;line-height:15.5px;color:#3a3a3a;-webkit-text-stroke:0.42px #3a3a3a;transform:scaleX(1.0326);transform-origin:0 0;">Language</div>
<div class="t" style="left:998.70px;top:731.58px;font-size:15.5px;line-height:15.5px;color:#3a3a3a;-webkit-text-stroke:0.42px #3a3a3a;transform:scaleX(0.9929);transform-origin:0 0;">Price</div>
<div class="t" style="left:1245.70px;top:732.08px;font-size:15.5px;line-height:15.5px;color:#3a3a3a;-webkit-text-stroke:0.42px #3a3a3a;transform:scaleX(1.0446);transform-origin:0 0;">Last videos</div>
<svg class="r" style="left:567.80px;top:734.2px" width="10" height="13" viewBox="0 0 10 13"><path d="M0.1 5.1L4.7 0.1L9.3 5.1Z" fill="#c8c8c8"/><path d="M0.1 6.9L9.3 6.9L4.7 12Z" fill="#6d6bf6"/></svg>
<svg class="r" style="left:698.90px;top:734.2px" width="10" height="13" viewBox="0 0 10 13"><path d="M0.1 5.1L4.7 0.1L9.3 5.1Z" fill="#c8c8c8"/><path d="M0.1 6.9L9.3 6.9L4.7 12Z" fill="#c8c8c8"/></svg>
<svg class="r" style="left:1039.60px;top:734px" width="10" height="13" viewBox="0 0 10 13"><path d="M0.1 5.1L4.7 0.1L9.3 5.1Z" fill="#c8c8c8"/><path d="M0.1 6.9L9.3 6.9L4.7 12Z" fill="#c8c8c8"/></svg>
<div class="r" style="left:31.20px;top:804.80px;width:23.60px;height:23.60px;border:2.2px solid #cdcdcd;border-radius:3px;box-sizing:border-box"></div>
<div class="r" style="left:79px;top:786.8px;width:54px;height:54px"><svg width="54" height="54" viewBox="0 0 100 100"><defs><linearGradient id="g0" x1="0" y1="0" x2="0" y2="1"><stop offset="0" stop-color="#dfe040"/><stop offset="0.12" stop-color="#f5c030"/><stop offset="0.3" stop-color="#f78a30"/><stop offset="0.45" stop-color="#f24a50"/><stop offset="0.55" stop-color="#ee3a6a"/><stop offset="0.64" stop-color="#b088d8"/><stop offset="0.72" stop-color="#48a8ec"/><stop offset="1" stop-color="#2ab4ea"/></linearGradient><clipPath id="c0"><circle cx="50" cy="50" r="50"/></clipPath><filter id="fb0"><feGaussianBlur stdDeviation="0.8"/></filter></defs>
<g clip-path="url(#c0)"><rect width="100" height="100" fill="url(#g0)"/><g filter="url(#fb0)">
<path d="M16 62 L30 50 L28 34 L38 41 L58 34 L92 28 L84 38 L62 44 L44 56 L26 62Z" fill="#2a7cc4"/>
<path d="M26 62 L44 54 L60 44 L84 38 L80 56 L70 68 L58 76 L60 90 L50 86 L42 74 L36 66Z" fill="#e6e4e0"/>
<path d="M50 52 Q66 38 82 42 Q80 60 66 70 Q54 70 50 52Z" fill="#a02a32"/>
<ellipse cx="66" cy="55" rx="9" ry="7" fill="#c84a50"/>
<path d="M84 44 L96 40 L98 54 L88 58Z" fill="#3a8a40"/>
<path d="M36 18 L40 24 L38 30Z" fill="#f0f0e0"/>
</g></g></svg></div>
<div class="t" style="left:149.40px;top:795.06px;font-size:18px;line-height:18px;color:#333333;-webkit-text-stroke:0.4px #333333;transform:scaleX(1.0672);transform-origin:0 0;">MatJoy</div>
<div class="r" style="left:149px;top:821.8px;width:21.3px;height:16.2px;background:linear-gradient(#000 0 33.3%,#dd0000 33.3% 66.6%,#ffce00 66.6%)"></div>
<div class="t" style="left:179.10px;top:822.18px;font-size:15.5px;line-height:15.5px;color:#a6a6a6;transform:scaleX(1.0086);transform-origin:0 0;">Germany</div>
<svg class="r" style="left:413.7px;top:804.7px" width="34.3" height="24" viewBox="0 0 34.3 24"><path d="M17.15 0.2C26 0.2 30.6 0.7 32.2 2.3C33.9 4 34.3 8 34.3 12C34.3 16 33.9 20 32.2 21.7C30.6 23.3 26 23.8 17.15 23.8C8.3 23.8 3.7 23.3 2.1 21.7C0.4 20 0 16 0 12C0 8 0.4 4 2.1 2.3C3.7 0.7 8.3 0.2 17.15 0.2Z" fill="#6f6efc"/><path d="M13.1 6.4L22.1 12L13.1 17.6Z" fill="#fff"/></svg>
<div class="t" style="left:478.25px;top:808.49px;font-size:17.5px;line-height:17.5px;color:#4a4a4a;transform:scaleX(1.1998);transform-origin:0 0;">90 000</div>
<div class="t" style="left:652.50px;top:808.99px;font-size:17.5px;line-height:17.5px;color:#333333;-webkit-text-stroke:0.4px #333333;transform:scaleX(0.9732);transform-origin:0 0;">1 059 511</div>
<div class="t" style="left:838.00px;top:808.49px;font-size:17.5px;line-height:17.5px;color:#4a4a4a;transform:scaleX(1.0497);transform-origin:0 0;">English</div>
<div class="t" style="left:998.75px;top:808.99px;font-size:17.5px;line-height:17.5px;color:#333333;-webkit-text-stroke:0.4px #333333;transform:scaleX(1.0970);transform-origin:0 0;">$26.48k - $63.57k</div>
<div class="r th" style="left:1245px;top:790px;width:96.5px;height:53.7px;border-radius:8px"><svg width="96.5" height="53.7" viewBox="0 0 96 54" preserveAspectRatio="none"><defs><filter id="bt0"><feGaussianBlur stdDeviation="0.6"/></filter></defs><g filter="url(#bt0)">
<rect width="96" height="54" fill="#1e2040"/>
<rect x="0" y="0" width="15" height="54" fill="#3a2a6a"/>
<rect x="0" y="28" width="15" height="16" fill="#e2dce8"/>
<ellipse cx="7" cy="13" rx="6" ry="7" fill="#7a48c8"/>
<ellipse cx="8" cy="38" rx="6" ry="5" fill="#6a40b0"/>
<ellipse cx="11" cy="48" rx="5" ry="5" fill="#c03090"/>
<ellipse cx="3" cy="3" rx="5" ry="4" fill="#c8d040"/>
<rect x="15" y="15" width="70" height="33" fill="#20286a" stroke="#5a6070" stroke-width="1"/>
<ellipse cx="37" cy="28" rx="6" ry="7" fill="#d02828"/>
<ellipse cx="27" cy="33" rx="5" ry="6" fill="#40c8c8"/>
<ellipse cx="55" cy="31" rx="8" ry="5" fill="#f0d030"/>
<ellipse cx="65" cy="26" rx="6" ry="6" fill="#f07a20"/>
<ellipse cx="45" cy="22" rx="4" ry="6" fill="#b0a040"/>
<text x="48" y="19" text-anchor="middle" font-family="Liberation Sans" font-weight="700" font-size="18" fill="#fcc838" stroke="#4a2a10" stroke-width="0.45" textLength="68" lengthAdjust="spacingAndGlyphs">PAC-MAN</text>
<text x="48" y="46" text-anchor="middle" font-family="Liberation Sans" font-weight="700" font-style="italic" font-size="12" fill="#f59a28" stroke="#4a2a10" stroke-width="0.4" textLength="62" lengthAdjust="spacingAndGlyphs">ANIMATION</text>
<rect x="85" y="0" width="11" height="54" fill="#203040"/>
<ellipse cx="90" cy="14" rx="6" ry="8" fill="#40d040"/>
<rect x="86" y="30" width="10" height="6" fill="#4090a0"/>
<rect x="86" y="40" width="10" height="5" fill="#3a7a90"/>
<rect x="15" y="48" width="70" height="6" fill="#283848"/>
<ellipse cx="28" cy="52" rx="6" ry="3" fill="#30a090"/>
<ellipse cx="60" cy="52" rx="5" ry="3" fill="#a040a0"/>
</g></svg></div>
<div class="r th" style="left:1352.6px;top:790px;width:96.4px;height:53.7px;border-radius:8px"><svg width="96.4" height="53.7" viewBox="0 0 96 54" preserveAspectRatio="none"><defs><filter id="bt1"><feGaussianBlur stdDeviation="0.6"/></filter></defs><g filter="url(#bt1)">
<rect width="96" height="54" fill="#14125a"/>
<g fill="none" stroke="#3232c8" stroke-width="2.5">
<path d="M0 14H28M0 44H34V54M38 20V54M62 0V28M70 14H96M72 40H96M80 30V54M52 40V54"/>
</g>
<g fill="#e8e8f0"><circle cx="5" cy="6" r="1.8"/><circle cx="12" cy="6" r="1.8"/><circle cx="19" cy="6" r="1.8"/><circle cx="26" cy="6" r="1.8"/><circle cx="33" cy="6" r="1.8"/><circle cx="47" cy="6" r="1.8"/><circle cx="47" cy="14" r="1.8"/><circle cx="47" cy="22" r="1.8"/><circle cx="47" cy="30" r="1.8"/><circle cx="47" cy="38" r="1.8"/><circle cx="47" cy="46" r="1.8"/><circle cx="79" cy="6" r="1.8"/><circle cx="90" cy="6" r="1.8"/></g>
<ellipse cx="13" cy="34" rx="7" ry="10" fill="#40d0d0"/>
<ellipse cx="16" cy="29" rx="5" ry="3" fill="#c8d8e0"/>
<ellipse cx="26" cy="24" rx="8" ry="12" fill="#d02020"/>
<ellipse cx="30" cy="18" rx="5" ry="3" fill="#d0d8e0"/>
<ellipse cx="55" cy="34" rx="9" ry="7" fill="#f0d030"/>
<ellipse cx="67" cy="17" rx="8" ry="11" fill="#f07820"/>
<ellipse cx="69" cy="11" rx="4" ry="2.5" fill="#d0d8e0"/>
<ellipse cx="74" cy="46" rx="9" ry="10" fill="#f060c0"/>
<ellipse cx="72" cy="40" rx="5" ry="3" fill="#d0d8e0"/>
</g></svg></div>
<svg class="r" style="left:1535.5px;top:804.5px" width="20" height="25" viewBox="0 0 20 25"><path d="M1.55 22.35V3.2Q1.55 1.45 3.3 1.45H15.5Q17.25 1.45 17.25 3.2V22.35L9.4 19.1Z" stroke="#cfcfcf" stroke-width="2.3" fill="none" stroke-linejoin="miter"/></svg>
<div class="r" style="left:31.20px;top:890.80px;width:23.60px;height:23.60px;border:2.2px solid #cdcdcd;border-radius:3px;box-sizing:border-box"></div>
<div class="r" style="left:79px;top:872.8px;width:54px;height:54px"><svg width="54" height="54" viewBox="0 0 100 100"><circle cx="48" cy="48" r="45" fill="#f3f3f3" stroke="#3a3a3a" stroke-width="3.2"/>
<circle cx="48" cy="48" r="39" fill="none" stroke="#666" stroke-width="0.8"/>
<path d="M20 40 A30 30 0 0 1 70 22" fill="none" stroke="#555" stroke-width="5" stroke-dasharray="2.5 2" opacity="0.75"/><path d="M52 78 A30 30 0 0 0 78 52" fill="none" stroke="#555" stroke-width="5" stroke-dasharray="2.5 2" opacity="0.75"/>
<circle cx="48" cy="48" r="27" fill="#f4f4f4" stroke="#444" stroke-width="1.3"/>
<path d="M30 44 C30 36 40 34 48 38 C56 34 64 32 66 42 C66 50 58 52 52 52 L46 56 C42 62 36 62 33 56 C30 52 30 48 30 44Z" fill="#4a4a4a"/>
<path d="M44 62 Q56 56 64 50" stroke="#e07070" stroke-width="2" fill="none"/>
</svg></div>
<div class="t" style="left:149.40px;top:881.06px;font-size:18px;line-height:18px;color:#333333;-webkit-text-stroke:0.4px #333333;transform:scaleX(1.0417);transform-origin:0 0;">ArcadiusKul and S...</div>
<svg class="r" style="left:149px;top:907.8px" width="21.3" height="16.2" viewBox="0 0 60 30" preserveAspectRatio="none"><rect width="60" height="30" fill="#012169"/><path d="M0,0 60,30M60,0 0,30" stroke="#fff" stroke-width="6"/><path d="M0,0 60,30M60,0 0,30" stroke="#C8102E" stroke-width="2.5"/><path d="M30,0v30M0,15h60" stroke="#fff" stroke-width="10"/><path d="M30,0v30M0,15h60" stroke="#C8102E" stroke-width="6"/></svg>
<div class="t" style="left:179.10px;top:908.18px;font-size:15.5px;line-height:15.5px;color:#a6a6a6;transform:scaleX(1.0571);transform-origin:0 0;">United Kingdom</div>
<svg class="r" style="left:413.7px;top:890.7px" width="34.3" height="24" viewBox="0 0 34.3 24"><path d="M17.15 0.2C26 0.2 30.6 0.7 32.2 2.3C33.9 4 34.3 8 34.3 12C34.3 16 33.9 20 32.2 21.7C30.6 23.3 26 23.8 17.15 23.8C8.3 23.8 3.7 23.3 2.1 21.7C0.4 20 0 16 0 12C0 8 0.4 4 2.1 2.3C3.7 0.7 8.3 0.2 17.15 0.2Z" fill="#6f6efc"/><path d="M13.1 6.4L22.1 12L13.1 17.6Z" fill="#fff"/></svg>
<div class="t" style="left:478.25px;top:894.49px;font-size:17.5px;line-height:17.5px;color:#4a4a4a;transform:scaleX(1.1438);transform-origin:0 0;">84 200</div>
<div class="t" style="left:652.50px;top:894.99px;font-size:17.5px;line-height:17.5px;color:#333333;-webkit-text-stroke:0.4px #333333;transform:scaleX(1.0597);transform-origin:0 0;">1 058 858</div>
<div class="t" style="left:838.00px;top:894.49px;font-size:17.5px;line-height:17.5px;color:#4a4a4a;transform:scaleX(1.0497);transform-origin:0 0;">English</div>
<div class="t" style="left:998.75px;top:894.99px;font-size:17.5px;line-height:17.5px;color:#333333;-webkit-text-stroke:0.4px #333333;transform:scaleX(0.9741);transform-origin:0 0;">$21.17k - $38.11k</div>
<div class="r th" style="left:1245px;top:876px;width:96.5px;height:53.7px;border-radius:8px"><svg width="96.5" height="53.7" viewBox="0 0 96 54" preserveAspectRatio="none"><defs><filter id="bt2"><feGaussianBlur stdDeviation="1"/></filter><pattern id="str" width="6" height="54" patternUnits="userSpaceOnUse"><rect width="6" height="54" fill="#e4e2e0"/><rect x="3" width="2" height="54" fill="#cfccc8"/></pattern></defs><g filter="url(#bt2)">
<rect width="96" height="54" fill="url(#str)"/>
<rect x="92" y="0" width="4" height="32" fill="#5a4030"/>
<rect x="0" y="30" width="96" height="24" fill="#c8c2b8"/>
<rect x="84" y="28" width="12" height="20" rx="4" fill="#d8d2ca"/>
<ellipse cx="11" cy="40" rx="12" ry="7" fill="#b8c040"/>
<ellipse cx="50" cy="5" rx="9" ry="6" fill="#7a5a40"/>
<ellipse cx="50" cy="11" rx="6" ry="5" fill="#e0b8a0"/>
<ellipse cx="22" cy="38" rx="3" ry="3" fill="#d8a088"/>
<ellipse cx="82" cy="40" rx="3" ry="4" fill="#e0b0a0"/>
<path d="M23 15 L80 12 L81 50 L24 51Z" fill="#2e2e36"/>
<path d="M50 32 L64 18 L72 26 L66 40 L54 42Z" fill="#1e1e24"/>
<path d="M60 22 L66 16 L70 22 L64 28Z" fill="#707078"/>
</g></svg></div>
<svg class="r" style="left:1535.5px;top:890.5px" width="20" height="25" viewBox="0 0 20 25"><path d="M1.55 22.35V3.2Q1.55 1.45 3.3 1.45H15.5Q17.25 1.45 17.25 3.2V22.35L9.4 19.1Z" stroke="#cfcfcf" stroke-width="2.3" fill="none" stroke-linejoin="miter"/></svg>
<div class="r" style="left:31.20px;top:976.80px;width:23.60px;height:23.60px;border:2.2px solid #cdcdcd;border-radius:3px;box-sizing:border-box"></div>
<div class="r" style="left:79px;top:958.8px;width:54px;height:54px"><svg width="54" height="54" viewBox="0 0 100 100"><defs><clipPath id="c2"><circle cx="50" cy="50" r="50"/></clipPath><filter id="b2"><feGaussianBlur stdDeviation="1.5"/></filter></defs>
<g clip-path="url(#c2)"><rect width="100" height="100" fill="#1c3a58"/>
<g filter="url(#b2)">
<ellipse cx="42" cy="25" rx="16" ry="14" fill="#7a8088"/>
<ellipse cx="70" cy="25" rx="16" ry="14" fill="#2a4a3a"/>
<ellipse cx="25" cy="52" rx="16" ry="11" fill="#14162a"/>
<ellipse cx="22" cy="62" rx="12" ry="6" fill="#2a90b0"/>
<ellipse cx="72" cy="55" rx="16" ry="20" fill="#a07a48"/>
<ellipse cx="48" cy="48" rx="10" ry="8" fill="#7a5a40"/>
<ellipse cx="52" cy="62" rx="10" ry="8" fill="#3a8a40"/>
<ellipse cx="32" cy="80" rx="18" ry="12" fill="#9a7a40"/>
<ellipse cx="58" cy="86" rx="16" ry="12" fill="#7a6a50"/>
<ellipse cx="80" cy="88" rx="12" ry="10" fill="#c09040"/>
</g></g></svg></div>
<div class="t" style="left:149.40px;top:967.06px;font-size:18px;line-height:18px;color:#333333;-webkit-text-stroke:0.4px #333333;transform:scaleX(1.0205);transform-origin:0 0;">NAT GEO AND STUFF...</div>
<svg class="r" style="left:149px;top:993.8px" width="21.3" height="16.2" viewBox="0 0 60 30" preserveAspectRatio="none"><rect width="60" height="30" fill="#012169"/><path d="M0,0 60,30M60,0 0,30" stroke="#fff" stroke-width="6"/><path d="M0,0 60,30M60,0 0,30" stroke="#C8102E" stroke-width="2.5"/><path d="M30,0v30M0,15h60" stroke="#fff" stroke-width="10"/><path d="M30,0v30M0,15h60" stroke="#C8102E" stroke-width="6"/></svg>
<div class="t" style="left:179.10px;top:994.18px;font-size:15.5px;line-height:15.5px;color:#a6a6a6;transform:scaleX(1.0571);transform-origin:0 0;">United Kingdom</div>
<svg class="r" style="left:413.7px;top:976.7px" width="34.3" height="24" viewBox="0 0 34.3 24"><path d="M17.15 0.2C26 0.2 30.6 0.7 32.2 2.3C33.9 4 34.3 8 34.3 12C34.3 16 33.9 20 32.2 21.7C30.6 23.3 26 23.8 17.15 23.8C8.3 23.8 3.7 23.3 2.1 21.7C0.4 20 0 16 0 12C0 8 0.4 4 2.1 2.3C3.7 0.7 8.3 0.2 17.15 0.2Z" fill="#6f6efc"/><path d="M13.1 6.4L22.1 12L13.1 17.6Z" fill="#fff"/></svg>
<div class="t" style="left:478.25px;top:980.49px;font-size:17.5px;line-height:17.5px;color:#4a4a4a;transform:scaleX(1.0504);transform-origin:0 0;">81 800</div>
<div class="t" style="left:652.50px;top:980.99px;font-size:17.5px;line-height:17.5px;color:#333333;-webkit-text-stroke:0.4px #333333;transform:scaleX(1.0918);transform-origin:0 0;">2 073 563</div>
<div class="t" style="left:838.00px;top:980.49px;font-size:17.5px;line-height:17.5px;color:#4a4a4a;transform:scaleX(1.0497);transform-origin:0 0;">English</div>
<div class="t" style="left:998.75px;top:980.99px;font-size:17.5px;line-height:17.5px;color:#333333;-webkit-text-stroke:0.4px #333333;transform:scaleX(1.0792);transform-origin:0 0;">$41.47k - $74.64k</div>
<div class="r th" style="left:1245px;top:962px;width:96.5px;height:53.7px;border-radius:8px"><svg width="96.5" height="53.7" viewBox="0 0 96 54" preserveAspectRatio="none"><defs><filter id="bt3"><feGaussianBlur stdDeviation="0.6"/></filter><clipPath id="ph"><ellipse cx="55" cy="37" rx="22" ry="14"/></clipPath></defs>
<rect width="96" height="54" fill="#050505"/><g filter="url(#bt3)">
<rect x="18" y="0" width="64" height="16" fill="#2a2e32"/>
<rect x="16" y="0" width="2.5" height="16" fill="#d8d8d8"/>
<rect x="18" y="16" width="64" height="36" fill="#3a342e"/>
<ellipse cx="30" cy="38" rx="12" ry="16" fill="#8a7a6a"/>
<ellipse cx="30" cy="38" rx="6" ry="12" fill="#5a4c40"/>
<g clip-path="url(#ph)">
<rect x="30" y="20" width="52" height="34" fill="#4a6a3c"/>
<rect x="30" y="20" width="52" height="12" fill="#b0b8c0"/>
<rect x="30" y="29" width="52" height="3" fill="#d8d8d6"/>
<rect x="30" y="32" width="52" height="5" fill="#84524a"/>
<path d="M52 37 L62 37 L66 54 L48 54Z" fill="#7a6a52"/>
</g>
<path d="M74 20 L82 16 L82 30Z" fill="#b0b0b0"/>
</g></svg></div>
<svg class="r" style="left:1535.5px;top:976.5px" width="20" height="25" viewBox="0 0 20 25"><path d="M1.55 22.35V3.2Q1.55 1.45 3.3 1.45H15.5Q17.25 1.45 17.25 3.2V22.35L9.4 19.1Z" stroke="#cfcfcf" stroke-width="2.3" fill="none" stroke-linejoin="miter"/></svg>
</body></html>
